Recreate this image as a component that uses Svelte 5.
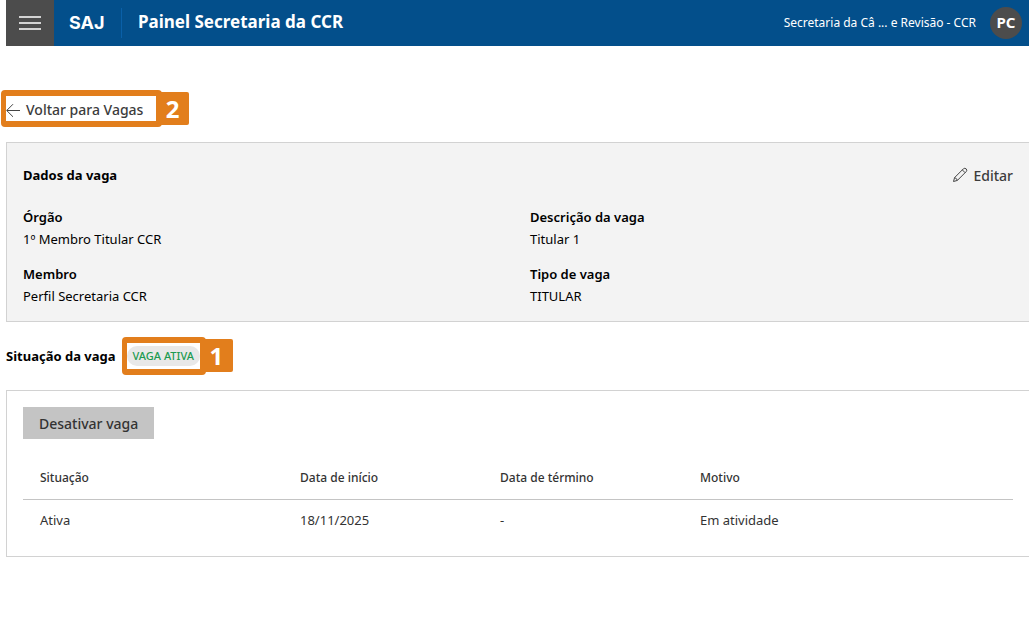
<script lang="ts">
  let menuOpen = false;

  const vaga = [
    { label: 'Órgão', value: '1º Membro Titular CCR' },
    { label: 'Descrição da vaga', value: 'Titular 1' },
    { label: 'Membro', value: 'Perfil Secretaria CCR' },
    { label: 'Tipo de vaga', value: 'TITULAR' }
  ];

  const historico = [
    { situacao: 'Ativa', inicio: '18/11/2025', termino: '-', motivo: 'Em atividade' }
  ];
</script>

<header class="topbar">
  <button class="menu" aria-label="Menu" aria-expanded={menuOpen} on:click={() => (menuOpen = !menuOpen)}>
    <svg width="22" height="14" viewBox="0 0 22 14" stroke="#fff" stroke-width="1.3">
      <path d="M0 1h22M0 7h22M0 13h22" />
    </svg>
  </button>
  <span class="logo">SAJ</span>
  <h1>Painel Secretaria da CCR</h1>
  <span class="lotacao">Secretaria da Câ ... e Revisão - CCR</span>
  <button class="avatar">PC</button>
</header>

<main>
  <nav>
    <div class="marked">
      <a class="back" href="#vagas">
        <svg width="14" height="14" viewBox="0 0 14 14" fill="none" stroke="#444" stroke-width="1">
          <path d="M14 7.5H1M7 1.2L.7 7.5L7 13.8" />
        </svg>
        Voltar para Vagas
      </a>
      <span class="frame"></span>
      <span class="step">2</span>
    </div>
  </nav>

  <section class="panel dados">
    <div class="panel-head">
      <h2>Dados da vaga</h2>
      <button class="edit">
        <svg width="16" height="16" viewBox="0 0 16 16" fill="none" stroke="#444" stroke-width="1" stroke-linejoin="round">
          <path d="M1.5 14.5L2.6 10.6L11.4 1.8Q12.8.7 14.2 1.9Q15.4 3.3 14.2 4.6L5.4 13.4ZM2.6 10.6Q4.8 11.2 5.4 13.4M10.3 2.9L13.1 5.7" />
        </svg>
        Editar
      </button>
    </div>
    <dl>
      {#each vaga as campo}
        <div>
          <dt>{campo.label}</dt>
          <dd>{campo.value}</dd>
        </div>
      {/each}
    </dl>
  </section>

  <div class="status">
    <h2>Situação da vaga</h2>
    <div class="marked">
      <span class="pill">VAGA ATIVA</span>
      <span class="frame"></span>
      <span class="step">1</span>
    </div>
  </div>

  <section class="panel situacao">
    <button class="desativar">Desativar vaga</button>
    <table>
      <thead>
        <tr>
          <th class="c-situacao">Situação</th>
          <th class="c-data">Data de início</th>
          <th class="c-data">Data de término</th>
          <th>Motivo</th>
        </tr>
      </thead>
      <tbody>
        {#each historico as item}
          <tr>
            <td>{item.situacao}</td>
            <td>{item.inicio}</td>
            <td>{item.termino}</td>
            <td>{item.motivo}</td>
          </tr>
        {/each}
      </tbody>
    </table>
  </section>
</main>

<style>
  :global(body) {
    margin: 0;
    background: #fff;
    color: #000;
    font-family: 'Segoe UI', 'Noto Sans', sans-serif;
    font-size: 13px;
    line-height: 20px;
  }

  h1, h2, dl, dd {
    margin: 0;
  }

  h2 {
    font-size: 13px;
    font-weight: 700;
  }

  button {
    border: none;
    padding: 0;
    font-family: inherit;
    cursor: pointer;
  }

  .topbar {
    display: flex;
    align-items: center;
    height: 46px;
    margin-left: 6px;
    padding-right: 7px;
    box-sizing: border-box;
    background: #034f8b;
    color: #fff;
  }

  .menu {
    display: flex;
    align-items: center;
    justify-content: center;
    width: 48px;
    height: 46px;
    background: #4c4c4c;
  }

  .logo {
    width: 68px;
    box-sizing: border-box;
    padding-left: 15px;
    border-right: 1px solid #0a60a8;
    font-family: Inter, sans-serif;
    font-size: 18px;
    font-weight: 700;
    line-height: 30px;
  }

  h1 {
    flex: 1;
    padding: 0 0 2px 16px;
    font-size: 17px;
    font-weight: 700;
    line-height: 24px;
  }

  .lotacao {
    font-size: 12px;
  }

  .avatar {
    width: 32px;
    height: 32px;
    margin-left: 14px;
    padding-bottom: 3px;
    border-radius: 50%;
    background: #4c4c4c;
    color: #fff;
    font-size: 15px;
    font-weight: 700;
  }

  main {
    margin-left: 6px;
  }

  nav {
    padding: 50px 0 21px;
  }

  .marked {
    position: relative;
    width: max-content;
  }

  .back {
    display: flex;
    align-items: center;
    gap: 6px;
    width: 150px;
    height: 25px;
    padding-top: 2px;
    box-sizing: border-box;
    color: #3c3c3c;
    font-size: 14px;
    font-weight: 500;
    text-decoration: none;
  }

  /* tutorial marks drawn over the page */
  .frame {
    position: absolute;
    inset: -6px -6px -6px -5px;
    border: 6px solid #e27e1c;
    border-left-width: 5px;
    border-radius: 4px;
    pointer-events: none;
  }

  .step {
    position: absolute;
    top: 50%;
    left: 100%;
    width: 33px;
    height: 33px;
    margin-top: -17px;
    border-radius: 2px;
    background: #e27e1c;
    color: #fff;
    font-size: 24px;
    font-weight: 700;
    line-height: 33px;
    text-align: center;
  }

  .panel {
    border: 1px solid #d2d2d2;
    border-right: none;
    padding: 16px;
  }

  .dados {
    padding-bottom: 14px;
    background: #f3f3f3;
  }

  .panel-head {
    display: flex;
    align-items: center;
    justify-content: space-between;
    height: 32px;
  }

  .edit {
    display: flex;
    align-items: center;
    gap: 5px;
    background: none;
    color: #3c3c3c;
    font-size: 14px;
    font-weight: 500;
  }

  dl {
    display: grid;
    grid-template-columns: 1fr 1fr;
    gap: 13px 24px;
    margin-top: 15px;
  }

  dt {
    font-weight: 600;
  }

  dt, dd {
    line-height: 22px;
  }

  .status {
    display: flex;
    align-items: center;
    gap: 11px;
    height: 68px;
  }

  .pill {
    display: block;
    margin: 3px 0;
    padding: 0 6px;
    border-radius: 10px;
    background: #e8e8e8;
    color: #1c9a50;
    font-size: 11px;
    font-weight: 500;
  }

  .situacao {
    padding-bottom: 15px;
  }

  .desativar {
    display: block;
    height: 32px;
    padding: 0 16px;
    background: #c4c4c4;
    color: #333;
    font-size: 14px;
    font-weight: 500;
  }

  table {
    width: 100%;
    margin-top: 18px;
    border-collapse: collapse;
    table-layout: fixed;
    color: #333;
  }

  th, td {
    padding: 0 0 0 17px;
    text-align: left;
  }

  th {
    height: 42px;
    border-bottom: 1px solid #c4c4c4;
    font-size: 12px;
    font-weight: 500;
  }

  td {
    height: 39px;
    padding-bottom: 2px;
  }

  .c-situacao {
    width: 243px;
  }

  .c-data {
    width: 183px;
  }
</style>
